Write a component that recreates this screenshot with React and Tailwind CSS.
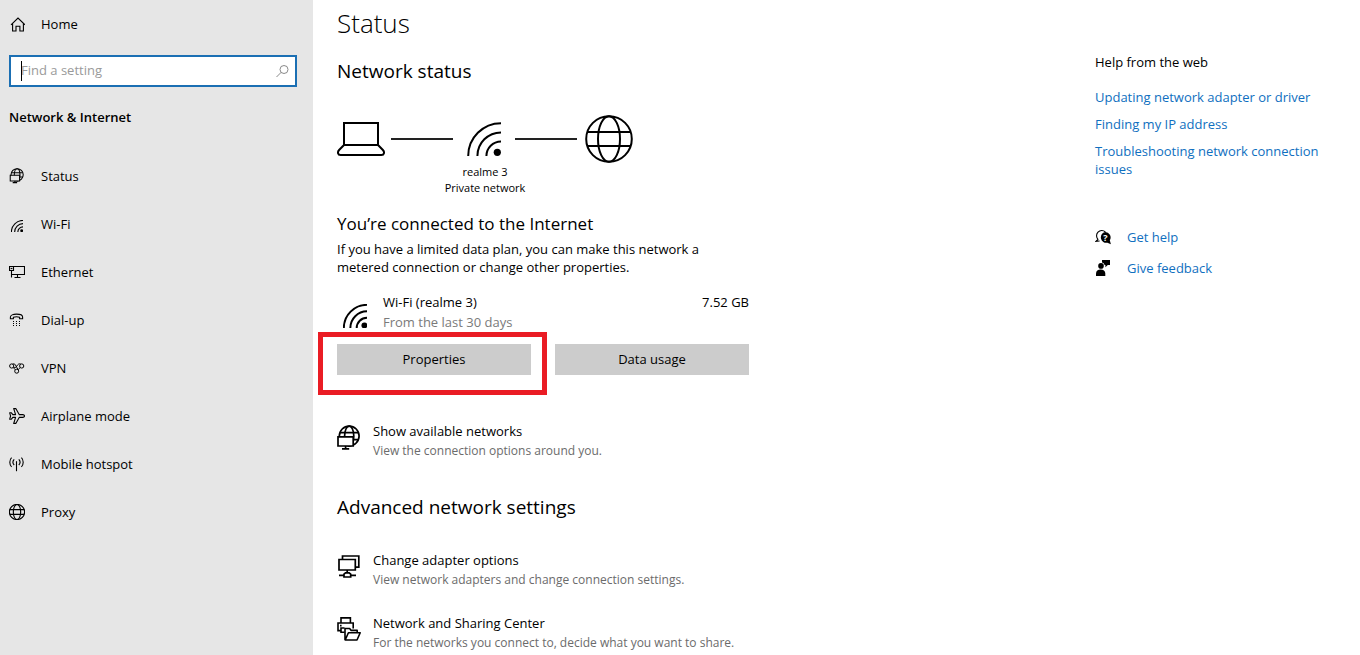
import React, { useState } from "react";

function Globe({ className, strokeWidth = 2 }) {
  return (
    <svg className={className} viewBox="0 0 48 48" fill="none" stroke="currentColor" strokeWidth={strokeWidth}>
      <circle cx="24" cy="24" r="22.8" />
      <ellipse cx="24" cy="24" rx="11" ry="22.8" />
      <path d="M2.3 17h43.4M2.3 31h43.4" />
    </svg>
  );
}

function Wifi({ className, strokeWidth = 2, dot = 3.6 }) {
  return (
    <svg className={className} viewBox="0 0 34 34" fill="none" stroke="currentColor" strokeWidth={strokeWidth}>
      <path d="M1.2 34A32.8 32.8 0 0 1 34 1.2M10.4 34A23.6 23.6 0 0 1 34 10.4M19.4 34A14.6 14.6 0 0 1 34 19.4" />
      <circle cx="30.3" cy="30.3" r={dot} fill="currentColor" stroke="none" />
    </svg>
  );
}

function Laptop({ className }) {
  return (
    <svg className={className} viewBox="0 0 48 34" fill="none" stroke="currentColor" strokeWidth="2">
      <path d="M7 1h34v22H7zM7 23l-4.9 5C.3 30 .6 33 3.6 33h40.8c3 0 3.3-3 1.5-5L41 23" />
    </svg>
  );
}

function GlobeMonitor({ className, screen, strokeWidth = 1.7 }) {
  return (
    <svg className={className} viewBox="0 0 24 26" fill="none" stroke="currentColor" strokeWidth={strokeWidth}>
      <circle cx="12.2" cy="11" r="9.9" />
      <ellipse cx="12.2" cy="11" rx="4.6" ry="9.9" />
      <path d="M3.2 7.6h18M12.2 14.6h9.3" />
      <path d="M1 11.8h15.2v9.2H1z" className={screen} />
      <path d="M8.6 21v3M5 23.8h7.2" />
    </svg>
  );
}

function HomeIcon() {
  return (
    <svg className="h-4 w-4" viewBox="0 0 16 16" fill="none" stroke="currentColor" strokeWidth="1.1">
      <path d="M2 7.8 9 1l7 6.8" />
      <path d="M3.6 6.5v7.5H7V9.3h3.9V14h3.5V6.5" />
    </svg>
  );
}

function EthernetIcon() {
  return (
    <svg className="h-4 w-4" viewBox="0 0 16 16" fill="none" stroke="currentColor" strokeWidth="1.1">
      <path d="M.5 2.5h4v4h-4zM4.5 2.5h11v8H2.5V6.5M2.5 6.5v7M8.5 10.5v3M5.5 13.5h6" />
      <path d="M1.6 3.9h1.8v1.2H1.6z" fill="currentColor" stroke="none" />
    </svg>
  );
}

function DialUpIcon() {
  return (
    <svg className="h-4 w-4" viewBox="0 0 16 16" fill="none" stroke="currentColor" strokeWidth="1.1">
      <path d="M1.4 6.8V5C1.4 3.2 4 2.1 7.5 2.1s6.1 1.1 6.1 2.9v1.8h-3V5.3c-1.8-.6-4.4-.6-6.2 0v1.5z" />
      <path d="M4 9.5h1M7 9.5h1M10 9.5h1M4 11.5h1M7 11.5h1M10 11.5h1M4 13.5h1M7 13.5h1M10 13.5h1" />
    </svg>
  );
}

function VpnIcon() {
  return (
    <svg className="h-4 w-4" viewBox="0 0 16 16" fill="none" stroke="currentColor" strokeWidth="1">
      <circle cx="2.7" cy="6" r="2.1" />
      <circle cx="12.7" cy="6" r="2.1" />
      <circle cx="7.7" cy="11.2" r="2" />
      <path d="M3.6 4.1c2-.8 2.7.4 3.4 1.9.7 1.5 1.2 2.2 2.2 3.6M11.8 4.1c-2-.8-3 .4-3.8 1.7-.8 1.3-1.6 2.4-3.2 1.6M11.2 7.6c-.8.5-1.3 1.1-1.7 2M4.2 7.6c.9.5 1.4 1.1 1.8 2" />
    </svg>
  );
}

function AirplaneIcon() {
  return (
    <svg className="h-4 w-4" viewBox="0 0 16 16" fill="none" stroke="currentColor" strokeWidth="1.1" strokeLinejoin="round">
      <path d="M10.2 6.6h3.6c2.3.4 2.3 2.4 0 2.8h-3.6l-3.4 6H4.7l1.9-6H3.8L2.4 11.2H.7L1.6 8 .7 4.8h1.7l1.4 1.8h2.8l-1.9-6h2.1z" />
    </svg>
  );
}

function HotspotIcon() {
  return (
    <svg className="h-4 w-4" viewBox="0 0 16 16" fill="none" stroke="currentColor" strokeWidth="1.1">
      <path d="M2.6 1.6C.2 4 .2 8.4 2.6 10.8M5.2 3.4c-1.5 1.6-1.5 4 0 5.6M9.8 3.4c1.5 1.6 1.5 4 0 5.6M12.4 1.6c2.4 2.4 2.4 6.8 0 9.2" />
      <path d="M7.5 5.2v10" />
    </svg>
  );
}

function SearchIcon() {
  return (
    <svg className="h-4 w-4" viewBox="0 0 16 16" fill="none" stroke="currentColor" strokeWidth="1">
      <circle cx="9" cy="6.5" r="4" />
      <path d="M6.2 9.3 1.5 14" />
    </svg>
  );
}

function AdapterIcon() {
  return (
    <svg className="h-6 w-6" viewBox="0 0 24 24" fill="none" stroke="currentColor" strokeWidth="1.7">
      <path d="M5.5 5.5V2h16.3v11.2h-3.3" />
      <path d="M2 5.5h16.3V16H2zM10.2 16v2.5M2 21.4h5M14 21.4h5M7 23v-2.8l1.5-1.4h3.6l1.6 1.4V23z" />
    </svg>
  );
}

function SharingIcon() {
  return (
    <svg className="h-6 w-6" viewBox="0 0 24 24" fill="none" stroke="currentColor" strokeWidth="1.6">
      <path d="M4 6V.9h9.4V6M7.6 15.2H4v-3M4 13.6H1V6h15.2v5.5M4 12.2V11h3.6" />
      <path d="M3 8.6h1.6" />
      <path d="M8 23V11.5h4.6l1.6 1.9h6v2.4M8.2 23l3.2-7.2h11.8L20 23z" strokeLinejoin="round" />
    </svg>
  );
}

function HelpIcon() {
  return (
    <svg className="h-4 w-4" viewBox="0 0 16 16" fill="none">
      <path d="M3.2 10.6A5.2 5.2 0 1 1 10.4 3M3.2 10.2 1 12.4l3.6-.4" stroke="currentColor" strokeWidth="1.1" />
      <path d="M10.2 3a5.4 5.4 0 0 1 4.6 8.2l1.1 4-3.5-1.5A5.4 5.4 0 1 1 10.2 3z" fill="currentColor" />
      <text x="10.3" y="11.6" textAnchor="middle" fill="white" className="text-[9px] font-bold">?</text>
    </svg>
  );
}

function FeedbackIcon() {
  return (
    <svg className="h-4 w-4" viewBox="0 0 16 16" fill="currentColor">
      <path d="M7 0h8v5h-2.2l-2.4 2.2V5H9.6A3.6 3.6 0 0 0 7 2.6z" />
      <circle cx="6" cy="5.9" r="2.8" />
      <path d="M1 16v-2.6C1 11 3 9.4 5.6 9.4S10.3 11 10.3 13.4V16z" />
    </svg>
  );
}

const navItems = [
  { label: "Status", icon: <GlobeMonitor className="h-4 w-4" screen="fill-[#e6e6e6]" /> },
  { label: "Wi-Fi", icon: <Wifi className="mt-1 ml-0.5 h-3 w-3" strokeWidth={3.2} dot={4.2} /> },
  { label: "Ethernet", icon: <EthernetIcon /> },
  { label: "Dial-up", icon: <DialUpIcon /> },
  { label: "VPN", icon: <VpnIcon /> },
  { label: "Airplane mode", icon: <AirplaneIcon /> },
  { label: "Mobile hotspot", icon: <HotspotIcon /> },
  { label: "Proxy", icon: <Globe className="h-4 w-4" strokeWidth={3.4} /> },
];

const helpLinks = [
  "Updating network adapter or driver",
  "Finding my IP address",
  "Troubleshooting network connection issues",
];

function Sidebar() {
  const [query, setQuery] = useState("");

  return (
    <aside className="w-[313px] shrink-0 bg-[#e6e6e6]">
      <a href="#home" className="flex h-[49px] items-center gap-4 px-[9px]">
        <HomeIcon />
        <span>Home</span>
      </a>

      <div className="px-[9px] pt-1.5 pr-4">
        <div className="relative flex h-8 items-center border-2 border-[#1b6fb3] bg-white pr-1">
          <input
            type="text"
            aria-label="Find a setting"
            value={query}
            onChange={(e) => setQuery(e.target.value)}
            placeholder="Find a setting"
            className="min-w-0 flex-1 bg-transparent pl-2.5 caret-transparent outline-none placeholder:text-[#9a9a9a]"
          />
          <span className="absolute left-2.5 h-5 w-px bg-black"></span>
          <span className="text-[#8a8a8a]">
            <SearchIcon />
          </span>
        </div>
      </div>

      <h2 className="mt-5 px-[9px] leading-5 font-semibold">Network &amp; Internet</h2>

      <nav className="mt-[26px]">
        {navItems.map((item) => (
          <a key={item.label} href="#nav" className="flex h-12 items-center gap-4 px-[9px]">
            <span className="flex w-4 shrink-0 pb-0.5">{item.icon}</span>
            <span>{item.label}</span>
          </a>
        ))}
      </nav>
    </aside>
  );
}

function SettingLink({ icon, title, text }) {
  return (
    <a href="#setting" className="flex gap-3">
      <span className="w-6 shrink-0 pt-1">{icon}</span>
      <span className="leading-5">
        <span className="block">{title}</span>
        <span className="block text-[12px] text-[#6b6b6b]">{text}</span>
      </span>
    </a>
  );
}

function NetworkDiagram() {
  return (
    <div className="mt-[30px] w-fit">
      <div className="flex items-center">
        <Laptop className="h-[34px] w-12" />
        <div className="ml-1.5 h-0.5 w-[62px] bg-[#222]"></div>
        <div className="flex w-[62px] justify-center">
          <Wifi className="h-[34px] w-[34px]" />
        </div>
        <div className="mr-2 h-0.5 w-[62px] bg-[#222]"></div>
        <Globe className="h-12 w-12" />
      </div>
      <p className="mt-px text-center text-[11px] leading-4">
        realme 3<br />
        Private network
      </p>
    </div>
  );
}

function Main() {
  return (
    <main className="w-full max-w-[412px] pt-[5px]">
      <h1 className="text-[26px] leading-9 font-light">Status</h1>
      <h2 className="mt-4 text-[19px] leading-7">Network status</h2>

      <NetworkDiagram />

      <h3 className="mt-4 text-[17px] leading-6">You’re connected to the Internet</h3>
      <p className="mt-1 leading-[18px]">
        If you have a limited data plan, you can make this network a metered connection or change other properties.
      </p>

      <div className="mt-4 flex items-end">
        <Wifi className="mr-4 mb-1 ml-1.5 h-6 w-6" strokeWidth={2.8} dot={4.2} />
        <div className="flex-1 leading-5">
          <div className="flex justify-between">
            <span>Wi-Fi (realme 3)</span>
            <span>7.52 GB</span>
          </div>
          <div className="text-[#7a7a7a]">From the last 30 days</div>
        </div>
      </div>

      <div className="mt-3 grid grid-cols-2 gap-6">
        <div className="relative">
          <button className="block h-[31px] w-full bg-[#ccc]">Properties</button>
          <div className="pointer-events-none absolute -top-3 -right-4 -bottom-5 -left-[19px] border-5 border-[#ea1c24]"></div>
        </div>
        <button className="block h-[31px] w-full bg-[#ccc]">Data usage</button>
      </div>

      <div className="mt-[46px]">
        <SettingLink
          icon={<GlobeMonitor className="h-[26px] w-6" screen="fill-white" />}
          title="Show available networks"
          text="View the connection options around you."
        />
      </div>

      <h2 className="mt-8 text-[19px] leading-7">Advanced network settings</h2>
      <div className="mt-[29px] space-y-[23px]">
        <SettingLink
          icon={<AdapterIcon />}
          title="Change adapter options"
          text="View network adapters and change connection settings."
        />
        <SettingLink
          icon={<SharingIcon />}
          title="Network and Sharing Center"
          text="For the networks you connect to, decide what you want to share."
        />
      </div>
    </main>
  );
}

function HelpPanel() {
  return (
    <aside className="w-[265px] shrink-0 pt-[53px] pr-6 leading-[18px]">
      <h2>Help from the web</h2>
      <ul className="mt-[17px] space-y-[9px] text-[#0f6fc0]">
        {helpLinks.map((link) => (
          <li key={link}>
            <a href="#help">{link}</a>
          </li>
        ))}
      </ul>
      <div className="mt-[50px] space-y-[13px]">
        <a href="#get-help" className="flex items-center gap-4">
          <HelpIcon />
          <span className="text-[#0f6fc0]">Get help</span>
        </a>
        <a href="#feedback" className="flex items-center gap-4">
          <FeedbackIcon />
          <span className="text-[#0f6fc0]">Give feedback</span>
        </a>
      </div>
    </aside>
  );
}

export default function App() {
  return (
    <div className="flex min-h-screen bg-white font-['Open_Sans','Noto_Sans',sans-serif] text-[13px] text-black">
      <Sidebar />
      <div className="flex flex-1 justify-between gap-6 pl-6">
        <Main />
        <HelpPanel />
      </div>
    </div>
  );
}
